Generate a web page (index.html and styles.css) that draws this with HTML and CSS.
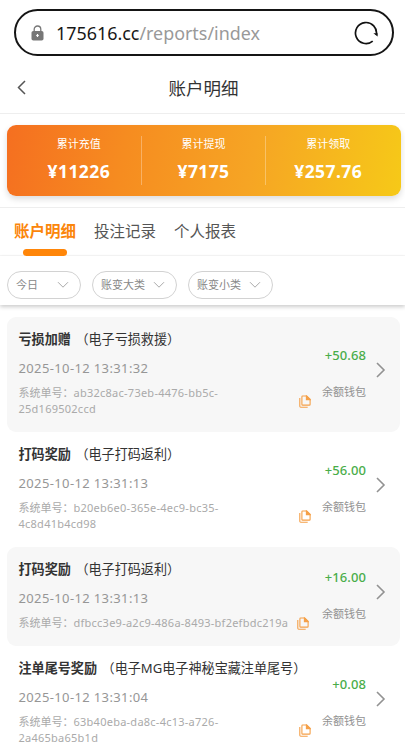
FILE: index.html
```html
<!DOCTYPE html>
<html lang="zh-CN">
<head>
  <meta charset="UTF-8" />
  <meta name="viewport" content="width=device-width, initial-scale=1.0"/>
  <title>账户明细</title>
  <link rel="stylesheet" href="styles.css">
</head>
<body>

<svg class="defs" width="0" height="0">
  <symbol id="copy" viewBox="0 0 12 13">
    <path d="M3.6 1h4.2l3.3 3.2v5.2q0 .7-.7.7H3.6q-.7 0-.7-.7V1.700q0-.7.7-.7z" />
    <path d="M7.400 1v3.600h3.600z" fill="currentColor" />
    <path d="M.8 3v8.300q0 .9.9.9h7" />
  </symbol>
  <symbol id="arrow" viewBox="0 0 10 16">
    <path d="M1 1l7 7-7 7" />
  </symbol>
  <symbol id="down" viewBox="0 0 12 8">
    <path d="M1 1.200l5 5 5-5" />
  </symbol>
</svg>

<div class="address-bar">
  <svg class="lock" viewBox="0 0 13 16">
    <path d="M3.200 7V4.300a3.300 3.300 0 0 1 6.600 0V7" fill="none" stroke="#777" stroke-width="1.300" />
    <rect x=".5" y="6" width="12" height="9.500" rx="1.800" fill="#777" />
    <path d="M6.500 9v3M5.200 10.500h2.600" stroke="#fff" stroke-width="1.200" />
  </svg>
  <div class="url">175616.cc<span>/reports/index</span></div>
  <svg class="reload" viewBox="0 0 24 24">
    <path d="M18.700 20.100A10.500 10.500 0 1 1 22.300 14" fill="none" stroke="#111" stroke-width="1.700" />
    <path d="M19.400 12.200h4.200v3.300z" fill="#111" />
  </svg>
</div>

<header class="nav">
  <svg class="back" viewBox="0 0 9 15"><path d="M8 1L1.500 7.500 8 14" /></svg>
  <h1>账户明细</h1>
</header>

<section class="summary-wrap">
  <div class="summary">
    <div class="total"><p>累计充值</p><strong>¥11226</strong></div>
    <div class="total"><p>累计提现</p><strong>¥7175</strong></div>
    <div class="total"><p>累计领取</p><strong>¥257.76</strong></div>
  </div>
</section>

<nav class="tabs">
  <div class="tab active">账户明细</div>
  <div class="tab">投注记录</div>
  <div class="tab">个人报表</div>
</nav>

<div class="filters">
  <div class="filter today">今日<svg><use href="#down" /></svg></div>
  <div class="filter">账变大类<svg><use href="#down" /></svg></div>
  <div class="filter">账变小类<svg><use href="#down" /></svg></div>
</div>

<main class="list">
  <article class="record">
    <div class="info">
      <h2>亏损加赠<span>（电子亏损救援）</span></h2>
      <time>2025-10-12 13:31:32</time>
      <div class="order wrapped">
        <p>系统单号：<span>ab32c8ac-73eb-4476-bb5c-<br>25d169502ccd</span></p>
        <svg class="copy"><use href="#copy" /></svg>
      </div>
    </div>
    <div class="money"><b>+50.68</b><small>余额钱包</small></div>
    <svg class="arrow"><use href="#arrow" /></svg>
  </article>

  <article class="record">
    <div class="info">
      <h2>打码奖励<span>（电子打码返利）</span></h2>
      <time>2025-10-12 13:31:13</time>
      <div class="order wrapped">
        <p>系统单号：<span>b20eb6e0-365e-4ec9-bc35-<br>4c8d41b4cd98</span></p>
        <svg class="copy"><use href="#copy" /></svg>
      </div>
    </div>
    <div class="money"><b>+56.00</b><small>余额钱包</small></div>
    <svg class="arrow"><use href="#arrow" /></svg>
  </article>

  <article class="record">
    <div class="info">
      <h2>打码奖励<span>（电子打码返利）</span></h2>
      <time>2025-10-12 13:31:13</time>
      <div class="order">
        <p>系统单号：<span>dfbcc3e9-a2c9-486a-8493-bf2efbdc219a</span></p>
        <svg class="copy"><use href="#copy" /></svg>
      </div>
    </div>
    <div class="money"><b>+16.00</b><small>余额钱包</small></div>
    <svg class="arrow"><use href="#arrow" /></svg>
  </article>

  <article class="record">
    <div class="info">
      <h2>注单尾号奖励<span>（电子MG电子神秘宝藏注单尾号）</span></h2>
      <time>2025-10-12 13:31:04</time>
      <div class="order wrapped">
        <p>系统单号：<span>63b40eba-da8c-4c13-a726-<br>2a465ba65b1d</span></p>
        <svg class="copy"><use href="#copy" /></svg>
      </div>
    </div>
    <div class="money"><b>+0.08</b><small>余额钱包</small></div>
    <svg class="arrow"><use href="#arrow" /></svg>
  </article>
</main>

</body>
</html>
```
FILE: styles.css
```css
* {
  box-sizing: border-box;
}
body {
  font-family: 'Noto Sans', 'Noto Sans CJK SC', sans-serif;
  margin: 0;
  height: 754px;
  overflow: hidden;
  background: #fff;
  color: #333;
}
h1, h2, p {
  margin: 0;
  font-weight: normal;
}
svg {
  fill: none;
  flex: none;
}
.defs {
  display: block;
  height: 0;
}
.address-bar {
  display: flex;
  align-items: center;
  height: 47px;
  margin: 9px 11px 0 14px;
  padding: 0 14px 0 15px;
  border: 2px solid #151515;
  border-radius: 24px;
}
.lock {
  width: 13px;
  height: 16px;
}
.url {
  flex: 1;
  margin-left: 12px;
  font-size: 17.9px;
  line-height: 24px;
  color: #171717;
  white-space: nowrap;
}
.url span {
  color: #999;
}
.reload {
  width: 24px;
  height: 24px;
}
.nav {
  display: flex;
  align-items: center;
  height: 58px;
  padding: 6px 18px 0 17px;
  border-bottom: 1px solid #eee;
}
.back {
  width: 9px;
  height: 15px;
  stroke: #555;
  stroke-width: 1.5;
}
.nav h1 {
  flex: 1;
  padding-right: 6px;
  font-size: 17.5px;
  line-height: 24px;
  text-align: center;
}
.summary-wrap {
  height: 94px;
  padding: 11px 4px 0 7px;
  border-bottom: 1px solid #eee;
}
.summary {
  display: flex;
  align-items: center;
  height: 71px;
  padding: 0 11px 0 10px;
  border-radius: 9px;
  background: linear-gradient(100deg, #f56f20, #f68c20 30%, #f6a524 62%, #f6c918);
  box-shadow: 0 3px 6px rgba(0,0,0,0.14);
  color: #fff;
}
.total {
  flex: 1;
  height: 49px;
  text-align: center;
}
.total + .total {
  border-left: 1px solid rgba(255,255,255,0.3);
}
.total p {
  font-size: 11px;
  line-height: 16px;
}
.total strong {
  display: block;
  margin-top: 7px;
  font-size: 17.5px;
  line-height: 24px;
  letter-spacing: 0.4px;
}
.tabs {
  display: flex;
  gap: 18px;
  height: 48px;
  padding: 11px 14px 0;
  border-bottom: 1px solid #f7f7f7;
}
.tab {
  position: relative;
  font-size: 15.5px;
  line-height: 24px;
  color: #555;
}
.tab.active {
  color: #fb860b;
  font-weight: bold;
}
.tab.active::after {
  content: "";
  position: absolute;
  left: 9px;
  bottom: -1px;
  width: 44px;
  height: 7px;
  border-radius: 4px;
  background: #ff8609;
}
.filters {
  display: flex;
  gap: 11px;
  height: 49px;
  padding: 15px 7px 0;
  box-shadow: 0 2px 4px rgba(0,0,0,0.2);
}
.filter {
  display: flex;
  align-items: center;
  justify-content: space-between;
  width: 85px;
  height: 28px;
  padding: 0 11px 2px 8px;
  border: 1px solid #d2d2d2;
  border-radius: 14px;
  font-size: 11px;
  color: #888;
}
.filter.today {
  width: 74px;
}
.filter svg {
  width: 12px;
  height: 8px;
  margin-top: 2px;
  stroke: #aaa;
}
.list {
  padding: 11.5px 5px 0 7px;
}
.record {
  display: flex;
  padding: 13px 14px 14.2px 11.5px;
  border-radius: 9px;
}
.record:nth-child(odd) {
  background: #f7f7f7;
}
.info {
  width: 292px;
}
.record h2 {
  height: 18px;
  font-size: 13.1px;
  line-height: 18px;
  font-weight: bold;
  white-space: nowrap;
}
.record h2 span {
  margin-left: 4.5px;
  font-weight: normal;
}
.record time {
  display: block;
  margin-top: 11px;
  font-size: 13px;
  line-height: 18px;
  letter-spacing: 0.37px;
  color: #969696;
}
.order {
  display: flex;
  align-items: center;
  gap: 9px;
  margin-top: 8px;
}
.order p {
  font-size: 11px;
  line-height: 16.5px;
  white-space: nowrap;
  color: #aaa;
}
.order span {
  letter-spacing: 0.25px;
}
.order.wrapped p {
  width: 272px;
}
.copy {
  width: 12px;
  height: 13px;
  color: #f5a048;
  stroke: #f5a048;
  stroke-width: 1.1;
}
.money {
  flex: 1;
  display: flex;
  flex-direction: column;
  justify-content: center;
  align-items: flex-end;
  gap: 19px;
}
.money b {
  font-size: 13px;
  line-height: 18px;
  font-weight: 500;
  letter-spacing: 0.1px;
  color: #49ad49;
}
.money small {
  font-size: 11px;
  line-height: 18px;
  color: #929292;
}
.arrow {
  align-self: center;
  width: 10px;
  height: 16px;
  margin: 0 0 7px 10px;
  stroke: #929292;
  stroke-width: 1.6;
}
```
